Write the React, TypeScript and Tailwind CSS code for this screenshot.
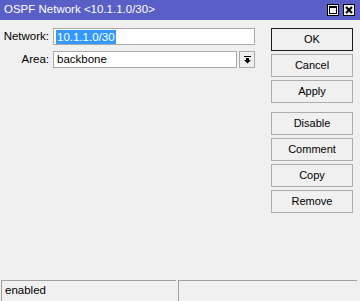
import React from "react";

const Btn = ({ label, def }: { label: string; def?: boolean }) => (
  <div
    className={`h-[23px] w-[82px] flex items-center justify-center text-[11px] text-black bg-[#f0f0f0] border ${
      def ? "border-[#1a1a1a]" : "border-[#adadad]"
    }`}
  >
    {label}
  </div>
);

export default function App() {
  return (
    <div
      className="w-[360px] h-[301px] bg-[#f0f0f0] flex flex-col overflow-hidden"
      style={{ fontFamily: "'Liberation Sans', Arial, sans-serif" }}
    >
      {/* Title bar */}
      <div className="h-[20px] bg-[#5a5fc8] flex items-center pl-[4px] pr-[5px]">
        <span className="text-white text-[11.5px] leading-none flex-1">OSPF Network &lt;10.1.1.0/30&gt;</span>
        <div className="flex gap-[4px]">
          <div className="w-[12px] h-[12px] bg-[#f0f0f0] border border-black flex items-center justify-center">
            <div className="w-[8px] h-[8px] border border-black border-t-2" />
          </div>
          <div className="w-[12px] h-[12px] bg-[#f0f0f0] border border-black flex items-center justify-center">
            <svg width="8" height="8" viewBox="0 0 8 8">
              <path d="M1 1 L7 7 M7 1 L1 7" stroke="black" strokeWidth="2" />
            </svg>
          </div>
        </div>
      </div>

      {/* Body */}
      <div className="flex-1 flex pt-[8px]">
        <div className="w-[256px] flex flex-col gap-[6px] pl-[3px]">
          <div className="flex items-center h-[17px]">
            <span className="w-[48px] text-right text-[11.5px] pr-[2px]">Network:</span>
            <div className="ml-[2px] w-[202px] h-[17px] bg-white border border-[#a9a9a9] flex items-center pl-[2px]">
              <span className="bg-[#3399ff] text-white text-[11.5px] leading-[14px] px-[1px]">10.1.1.0/30</span>
            </div>
          </div>
          <div className="flex items-center h-[17px]">
            <span className="w-[48px] text-right text-[11.5px] pr-[2px]">Area:</span>
            <div className="ml-[2px] w-[184px] h-[17px] bg-white border border-[#a9a9a9] flex items-center pl-[3px]">
              <span className="text-[11.5px]">backbone</span>
            </div>
            <div className="ml-[2px] w-[16px] h-[17px] bg-[#f0f0f0] border border-[#a9a9a9] flex items-center justify-center">
              <svg width="7" height="8" viewBox="0 0 7 8">
                <path d="M0 0.5 H7" stroke="black" strokeWidth="1" />
                <rect x="2" y="2" width="3" height="2" fill="black" />
                <path d="M0 4 H7 L3.5 7.5 Z" fill="black" />
              </svg>
            </div>
          </div>
        </div>
        <div className="ml-[15px] flex flex-col">
          <div className="flex flex-col gap-[3px]">
            <Btn label="OK" def />
            <Btn label="Cancel" />
            <Btn label="Apply" />
          </div>
          <div className="flex flex-col gap-[3px] mt-[9px]">
            <Btn label="Disable" />
            <Btn label="Comment" />
            <Btn label="Copy" />
            <Btn label="Remove" />
          </div>
        </div>
      </div>

      {/* Status bar */}
      <div className="h-[21px] flex gap-[2px] pl-[1px] pr-[3px]">
        <div className="w-[175px] h-full border-t border-l border-[#a0a0a0] flex items-center pl-[3px] text-[11.5px]">
          enabled
        </div>
        <div className="flex-1 h-full border-t border-l border-[#a0a0a0]" />
      </div>
    </div>
  );
}
